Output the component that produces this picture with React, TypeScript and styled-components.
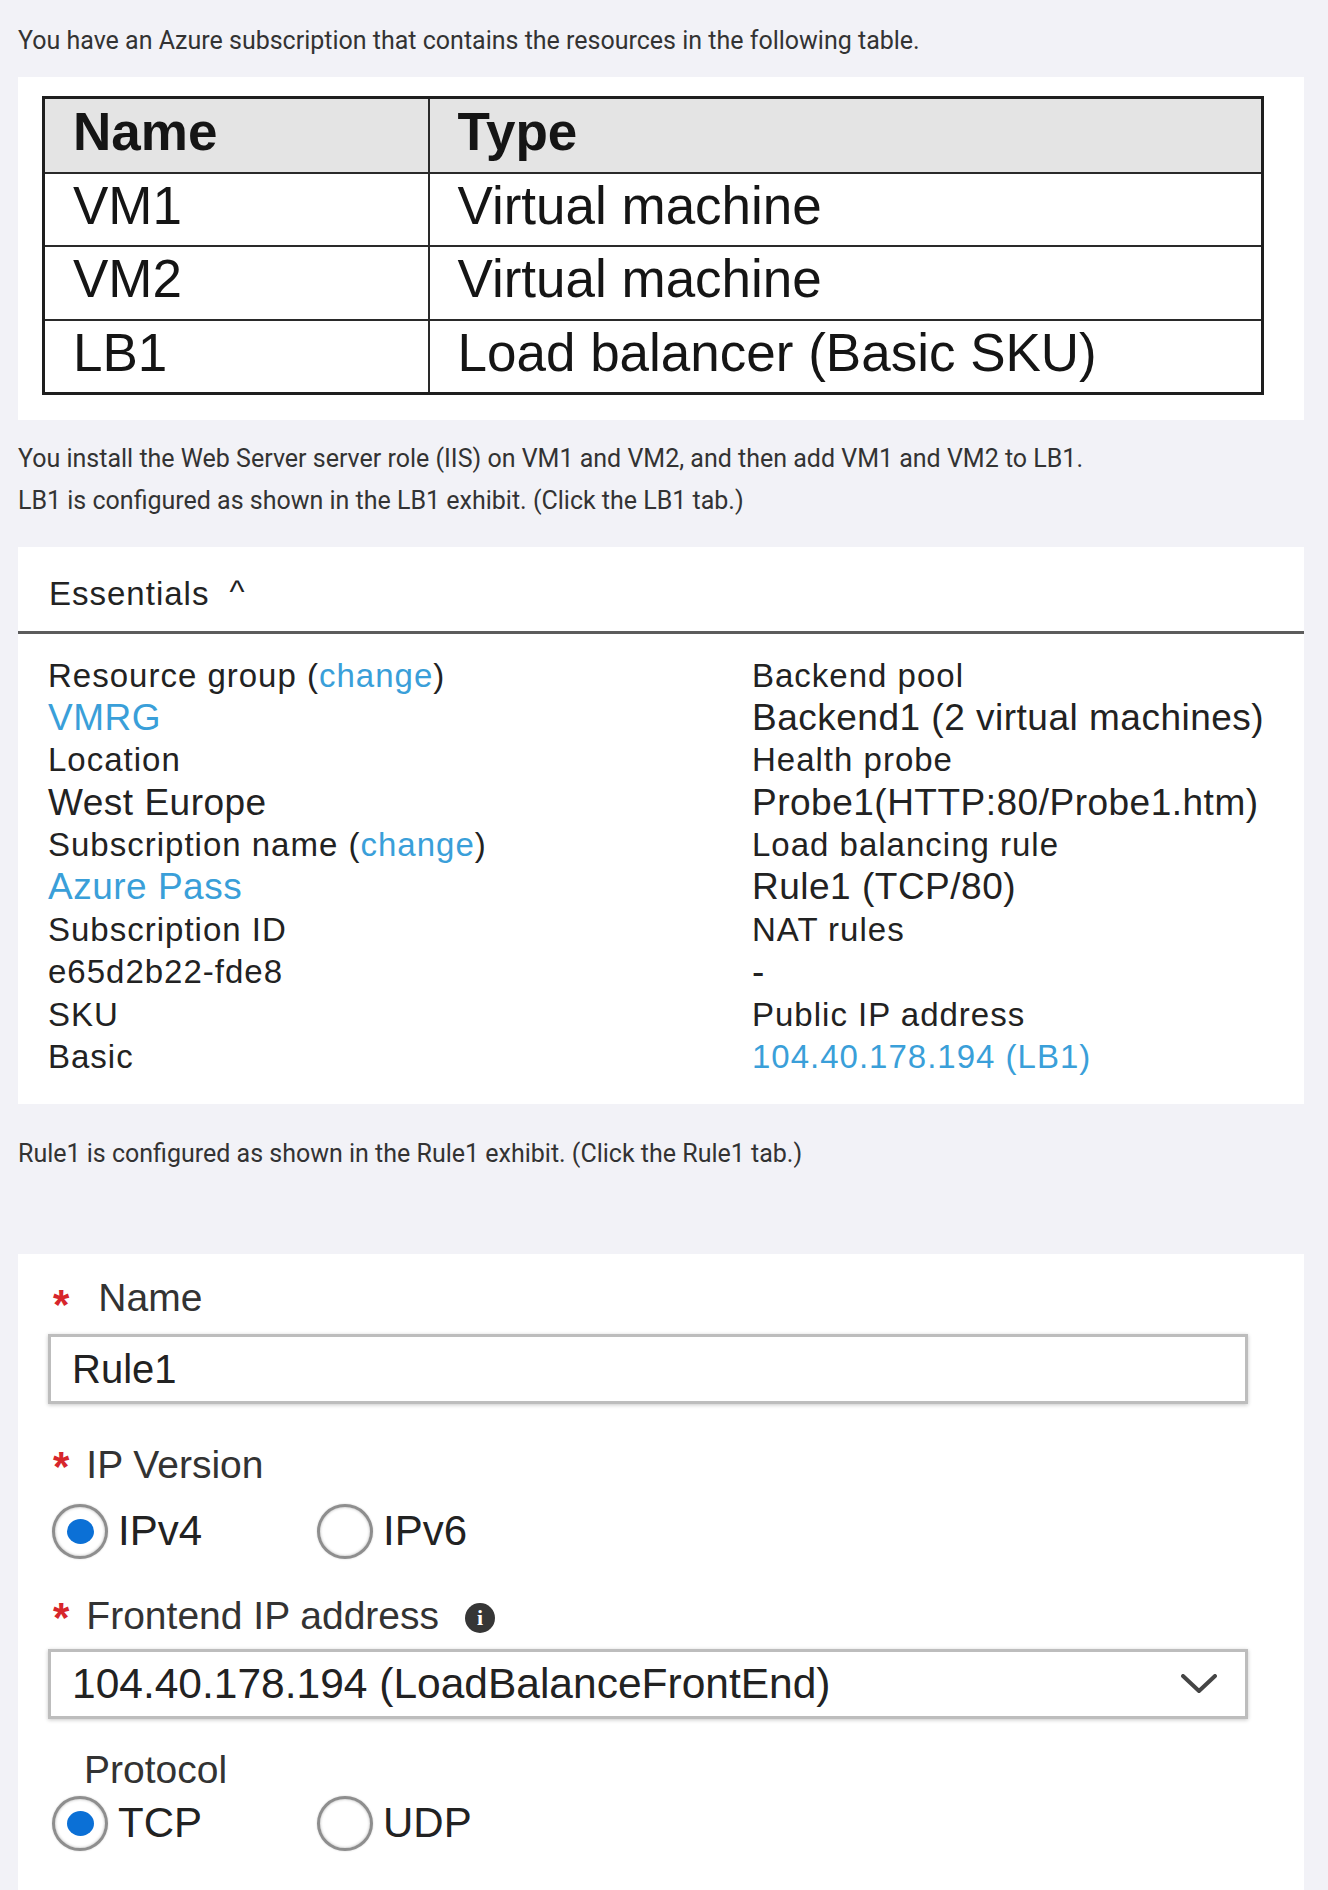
import React from "react";
import styled, { createGlobalStyle } from "styled-components";

const GlobalStyle = createGlobalStyle`
  html, body {
    margin: 0;
    padding: 0;
    background: #f2f2f7;
  }
  body {
    font-family: Roboto, "Liberation Sans", Arial, sans-serif;
  }
  *, *::before, *::after {
    box-sizing: border-box;
  }
`;

const Page = styled.div`
  display: flex;
  flex-direction: column;
  height: 1890px;
  overflow: hidden;
  padding: 20px 24px 0 18px;
`;

const Question = styled.p<{ $mt?: number }>`
  margin: ${(p) => p.$mt ?? 0}px 0 0 0;
  font-family: Roboto, "Liberation Sans", Arial, sans-serif;
  font-size: 25px;
  line-height: 42px;
  color: #333;
  white-space: nowrap;
`;

const Panel = styled.section<{ $mt: number }>`
  margin-top: ${(p) => p.$mt}px;
  background: #ffffff;
`;

/* ---------- Resource table ---------- */

const TablePanel = styled(Panel)`
  padding: 19px 40px 25px 24px;
`;

const ResourceTable = styled.table`
  border-collapse: collapse;
  width: 1222px;
  font-family: "Liberation Sans", Arial, sans-serif;
  font-size: 53px;
  color: #151515;
  border: 3px solid #1e1e1e;
`;

const HeadCell = styled.th<{ $w?: number }>`
  width: ${(p) => (p.$w ? `${p.$w}px` : "auto")};
  height: 75px;
  padding: 0 0 8px 28px;
  background: #e4e4e4;
  border: 2px solid #2a2a2a;
  text-align: left;
  font-weight: bold;
  line-height: 1;
  vertical-align: middle;
`;

const Cell = styled.td`
  height: 73.5px;
  padding: 0 0 8px 28px;
  border: 2px solid #2a2a2a;
  line-height: 1;
  vertical-align: middle;
`;

/* ---------- Essentials ---------- */

const EssHeader = styled.div`
  display: flex;
  align-items: center;
  height: 87px;
  padding: 10px 0 0 31px;
  border-bottom: 3px solid #5c5c5c;
  font-family: "Liberation Sans", Arial, sans-serif;
  font-size: 33px;
  letter-spacing: 1px;
  color: #232323;
`;

const Caret = styled.span`
  align-self: flex-start;
  margin: 18px 0 0 20px;
  font-size: 32px;
  line-height: 1;
`;

const EssGrid = styled.div`
  display: grid;
  grid-template-columns: 704px 1fr;
  padding: 21px 0 26px 30px;
`;

const EssColumn = styled.div`
  display: flex;
  flex-direction: column;
`;

const EssLine = styled.div<{ $value?: boolean; $link?: boolean }>`
  height: 42.4px;
  line-height: 42.4px;
  font-family: "Liberation Sans", Arial, sans-serif;
  font-size: ${(p) => (p.$value ? 37 : 33)}px;
  letter-spacing: ${(p) => (p.$value ? 0.5 : 1)}px;
  color: ${(p) => (p.$link ? "#3a9fd9" : "#222")};
  white-space: nowrap;
`;

const Link = styled.span`
  color: #3a9fd9;
`;

/* ---------- Rule form ---------- */

const FormPanel = styled(Panel)`
  flex: 1;
  display: flex;
  flex-direction: column;
  padding: 22px 56px 0 30px;
  font-family: "Liberation Sans", Arial, sans-serif;
`;

const FieldLabel = styled.div<{ $mt?: number; $indent?: number }>`
  display: flex;
  align-items: flex-start;
  height: 44px;
  margin-top: ${(p) => p.$mt ?? 0}px;
  padding-left: ${(p) => p.$indent ?? 0}px;
  font-size: 39px;
  line-height: 44px;
  color: #333;
  white-space: nowrap;
`;

const Star = styled.span<{ $drop: number; $gap: number }>`
  margin: ${(p) => p.$drop}px ${(p) => p.$gap}px 0 5px;
  font-size: 42px;
  font-weight: bold;
  line-height: 44px;
  color: #d7262c;
`;

const InfoIcon = styled.span`
  display: flex;
  align-items: center;
  justify-content: center;
  align-self: center;
  width: 30px;
  height: 30px;
  margin: 4px 0 0 26px;
  border-radius: 50%;
  background: #363636;
  color: #fff;
  font-family: "Liberation Serif", serif;
  font-weight: bold;
  font-size: 22px;
  line-height: 1;
`;

const FieldBox = styled.div<{ $mt: number; $size: number }>`
  display: flex;
  align-items: center;
  justify-content: space-between;
  width: 1200px;
  height: 70px;
  margin-top: ${(p) => p.$mt}px;
  padding: 0 28px 0 21px;
  border: 3px solid #bdbdbd;
  box-shadow: 0 1px 4px rgba(0, 0, 0, 0.22);
  background: #fff;
  font-size: ${(p) => p.$size}px;
  color: #222;
  white-space: nowrap;
`;

const RadioGroup = styled.div<{ $mt: number }>`
  display: flex;
  align-items: center;
  height: 56px;
  margin: ${(p) => p.$mt}px 0 0 4px;
`;

const RadioOption = styled.label`
  display: flex;
  align-items: center;
  gap: 10px;
  width: 265px;
  font-size: 42px;
  color: #222;
`;

const RadioCircle = styled.span<{ $checked?: boolean }>`
  display: flex;
  align-items: center;
  justify-content: center;
  flex: none;
  width: 56px;
  height: 55px;
  border-radius: 50%;
  border: 3px solid #8e8e8e;
  background: #fff;
  box-shadow: inset 0 0 3px rgba(0, 0, 0, 0.3), 0 0 2px rgba(0, 0, 0, 0.2);

  &::after {
    content: "";
    display: ${(p) => (p.$checked ? "block" : "none")};
    width: 27px;
    height: 25px;
    border-radius: 50%;
    background: #0b70d6;
  }
`;

const Chevron = () => (
  <svg width="36" height="20" viewBox="0 0 36 20" fill="none">
    <path
      d="M2 2 L18 17 L34 2"
      stroke="#454545"
      strokeWidth="4"
      strokeLinecap="round"
      strokeLinejoin="round"
    />
  </svg>
);

const Radio = ({ label, checked }: { label: string; checked?: boolean }) => (
  <RadioOption>
    <RadioCircle $checked={checked} />
    {label}
  </RadioOption>
);

const resources = [
  { name: "VM1", type: "Virtual machine" },
  { name: "VM2", type: "Virtual machine" },
  { name: "LB1", type: "Load balancer (Basic SKU)" },
];

type Line = { text: React.ReactNode; value?: boolean; link?: boolean };

const leftLines: Line[] = [
  { text: <>Resource group (<Link>change</Link>)</> },
  { text: "VMRG", value: true, link: true },
  { text: "Location" },
  { text: "West Europe", value: true },
  { text: <>Subscription name (<Link>change</Link>)</> },
  { text: "Azure Pass", value: true, link: true },
  { text: "Subscription ID" },
  { text: "e65d2b22-fde8" },
  { text: "SKU" },
  { text: "Basic" },
];

const rightLines: Line[] = [
  { text: "Backend pool" },
  { text: "Backend1 (2 virtual machines)", value: true },
  { text: "Health probe" },
  { text: "Probe1(HTTP:80/Probe1.htm)", value: true },
  { text: "Load balancing rule" },
  { text: "Rule1 (TCP/80)", value: true },
  { text: "NAT rules" },
  { text: "-", value: true },
  { text: "Public IP address" },
  { text: "104.40.178.194 (LB1)", link: true },
];

const Column = ({ lines }: { lines: Line[] }) => (
  <EssColumn>
    {lines.map((l, i) => (
      <EssLine key={i} $value={l.value} $link={l.link}>
        {l.text}
      </EssLine>
    ))}
  </EssColumn>
);

export default function App() {
  return (
    <>
      <GlobalStyle />
      <Page>
        <Question>
          You have an Azure subscription that contains the resources in the following table.
        </Question>

        <TablePanel $mt={15}>
          <ResourceTable>
            <thead>
              <tr>
                <HeadCell $w={385}>Name</HeadCell>
                <HeadCell>Type</HeadCell>
              </tr>
            </thead>
            <tbody>
              {resources.map((r) => (
                <tr key={r.name}>
                  <Cell>{r.name}</Cell>
                  <Cell>{r.type}</Cell>
                </tr>
              ))}
            </tbody>
          </ResourceTable>
        </TablePanel>

        <Question $mt={18}>
          You install the Web Server server role (IIS) on VM1 and VM2, and then add VM1 and VM2 to LB1.
        </Question>
        <Question>LB1 is configured as shown in the LB1 exhibit. (Click the LB1 tab.)</Question>

        <Panel $mt={25}>
          <EssHeader>
            Essentials
            <Caret>^</Caret>
          </EssHeader>
          <EssGrid>
            <Column lines={leftLines} />
            <Column lines={rightLines} />
          </EssGrid>
        </Panel>

        <Question $mt={29}>
          Rule1 is configured as shown in the Rule1 exhibit. (Click the Rule1 tab.)
        </Question>

        <FormPanel $mt={79}>
          <FieldLabel>
            <Star $drop={7} $gap={29}>*</Star>
            Name
          </FieldLabel>
          <FieldBox $mt={14} $size={40}>
            Rule1
          </FieldBox>

          <FieldLabel $mt={39}>
            <Star $drop={2} $gap={17}>*</Star>
            IP Version
          </FieldLabel>
          <RadioGroup $mt={16}>
            <Radio label="IPv4" checked />
            <Radio label="IPv6" />
          </RadioGroup>

          <FieldLabel $mt={35}>
            <Star $drop={2} $gap={17}>*</Star>
            Frontend IP address
            <InfoIcon>i</InfoIcon>
          </FieldLabel>
          <FieldBox $mt={11} $size={42.5}>
            104.40.178.194 (LoadBalanceFrontEnd)
            <Chevron />
          </FieldBox>

          <FieldLabel $mt={29} $indent={36}>
            Protocol
          </FieldLabel>
          <RadioGroup $mt={3}>
            <Radio label="TCP" checked />
            <Radio label="UDP" />
          </RadioGroup>
        </FormPanel>
      </Page>
    </>
  );
}
